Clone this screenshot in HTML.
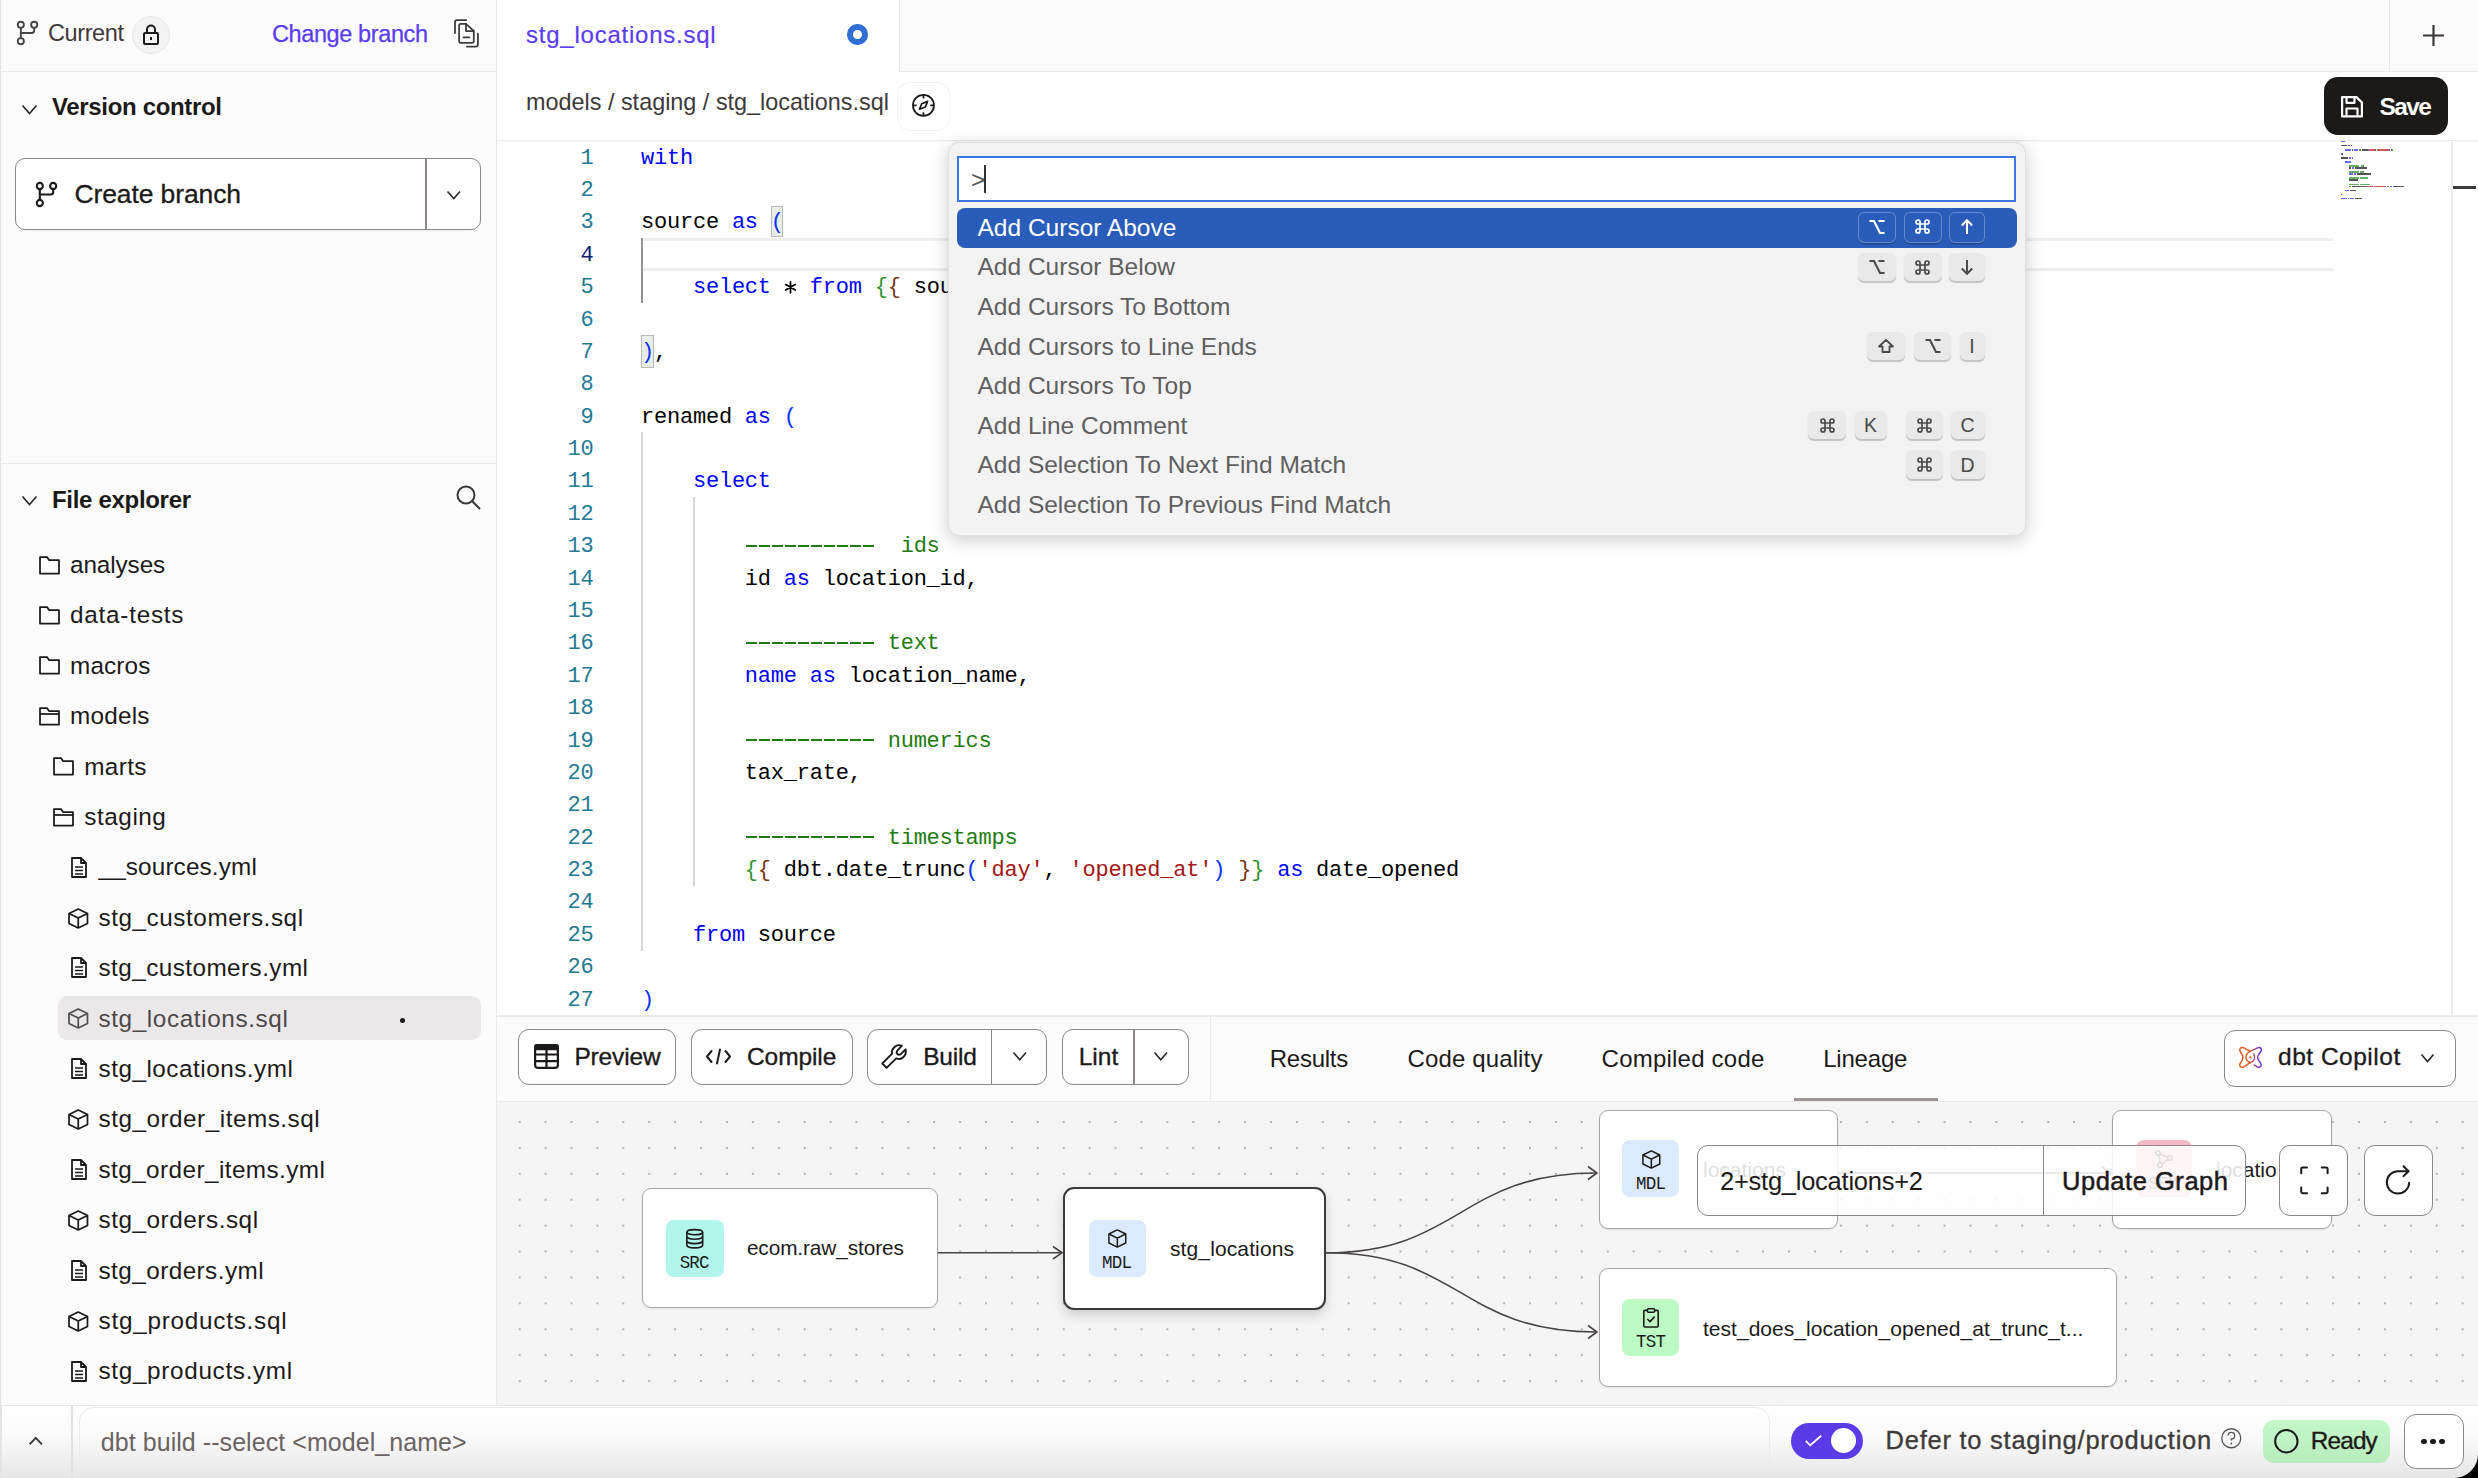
<!DOCTYPE html>
<html><head><meta charset="utf-8"><style>
*{box-sizing:border-box;margin:0;padding:0}
html,body{width:2478px;height:1478px;overflow:hidden;background:#fafafa;font-family:"Liberation Sans",sans-serif;color:#1c1a19}
body{position:relative}
.abs{position:absolute}
.t{position:absolute;white-space:pre;line-height:1}
svg{position:absolute;overflow:visible}
</style></head><body>
<div class="abs" style="left:0.00px;top:0.00px;width:497.00px;height:1405.00px;background:#fcfcfc;"></div>
<div class="abs" style="left:0.00px;top:0.00px;width:1.20px;height:1478.00px;background:#e2e2e2;"></div>
<div class="abs" style="left:496.00px;top:0.00px;width:1.30px;height:1405.00px;background:#ebe9e9;"></div>
<div class="abs" style="left:0.00px;top:70.60px;width:496.00px;height:1.40px;background:#ebe9e9;"></div>
<div class="abs" style="left:0.00px;top:463.00px;width:496.00px;height:1.40px;background:#ebe9e9;"></div>
<svg style="left:17.00px;top:21.00px;" width="21.00" height="24.00" viewBox="0 0 21 24"><g fill="none" stroke="#4a4545" stroke-width="2" transform="scale(0.954545,0.96)"><circle cx="4" cy="4" r="3.2"/><circle cx="18" cy="4" r="3.2"/><circle cx="4" cy="21" r="3.2"/><path d="M4 7.2 V17.8"/><path d="M18 7.2 V10 Q18 12.5 15.5 12.5 H4"/></g></svg>
<div class="t" style="left:48.00px;top:22.31px;font-size:23.50px;color:#3f3a3a;font-family:'Liberation Sans',sans-serif;letter-spacing:-0.394px;">Current</div>
<div class="abs" style="left:132.00px;top:16.00px;width:38.00px;height:38.00px;border-radius:50%;background:#f3f3f3;border:1px solid #e8e8e8;"></div>
<svg style="left:143.00px;top:24.00px;" width="16.00" height="21.00" viewBox="0 0 16 21"><g fill="none" stroke="#1c1a19" stroke-width="2"><rect x="1" y="9" width="14" height="11" rx="1"/><path d="M4 9 V5.5 A4 4 0 0 1 12 5.5 V9"/><path d="M8 13 V16"/></g></svg>
<div class="t" style="left:272.00px;top:23.31px;font-size:23.50px;color:#5b3cf0;font-family:'Liberation Sans',sans-serif;letter-spacing:-0.392px;-webkit-text-stroke:0.25px #5b3cf0;">Change branch</div>
<svg style="left:450.00px;top:15.00px;" width="32.00" height="35.00" viewBox="450 15 32 35"><g fill="none" stroke="#3f3a3a" stroke-width="1.75" stroke-linecap="round" stroke-linejoin="round"><path d="M455 33 V22 Q455 20 457 20 H466.2"/><path d="M461 23.9 H466 L473.8 31 V41 Q473.8 42.8 472 42.8 H461 Q459.1 42.8 459.1 41 V25.8 Q459.1 23.9 461 23.9 Z"/><path d="M466 23.9 V31 H473.8"/><path d="M463.5 37.4 H469.4"/><path d="M477.9 33.7 V44.5 Q477.9 46.5 476 46.5 H466.9"/></g></svg>
<svg style="left:22.00px;top:104.50px;" width="15.00" height="9.00" viewBox="0 0 15 9"><polyline points="0.5,0.5 7.5,8.5 14.5,0.5" fill="none" stroke="#2a2626" stroke-width="1.6" stroke-linecap="butt" stroke-linejoin="miter"/></svg>
<div class="t" style="left:52.00px;top:94.88px;font-size:24.00px;color:#1c1a19;font-family:'Liberation Sans',sans-serif;font-weight:bold;letter-spacing:-0.336px;">Version control</div>
<div class="abs" style="left:15.00px;top:158.00px;width:466.00px;height:72.00px;border:1.5px solid #8d8787;border-radius:10px;background:#fff;box-shadow:0 1px 2px rgba(0,0,0,0.06);"></div>
<div class="abs" style="left:425.00px;top:158.00px;width:1.50px;height:72.00px;background:#8d8787;"></div>
<svg style="left:36.00px;top:182.00px;" width="21.00" height="25.00" viewBox="0 0 21 25"><g fill="none" stroke="#1c1a19" stroke-width="2.2" transform="scale(0.954545,1)"><circle cx="4" cy="4" r="3.2"/><circle cx="18" cy="4" r="3.2"/><circle cx="4" cy="21" r="3.2"/><path d="M4 7.2 V17.8"/><path d="M18 7.2 V10 Q18 12.5 15.5 12.5 H4"/></g></svg>
<div class="t" style="left:74.50px;top:180.57px;font-size:26.50px;color:#1c1a19;font-family:'Liberation Sans',sans-serif;letter-spacing:-0.119px;-webkit-text-stroke:0.30px #1c1a19;">Create branch</div>
<svg style="left:446.50px;top:190.50px;" width="13.50" height="8.00" viewBox="0 0 13.5 8"><polyline points="0.5,0.5 6.75,7.5 13,0.5" fill="none" stroke="#2a2626" stroke-width="1.6" stroke-linecap="butt" stroke-linejoin="miter"/></svg>
<svg style="left:22.00px;top:495.50px;" width="15.00" height="9.00" viewBox="0 0 15 9"><polyline points="0.5,0.5 7.5,8.5 14.5,0.5" fill="none" stroke="#2a2626" stroke-width="1.6" stroke-linecap="butt" stroke-linejoin="miter"/></svg>
<div class="t" style="left:52.00px;top:487.68px;font-size:24.00px;color:#1c1a19;font-family:'Liberation Sans',sans-serif;font-weight:bold;letter-spacing:-0.310px;">File explorer</div>
<svg style="left:456.00px;top:485.00px;" width="25.00" height="25.00" viewBox="0 0 25 25"><g fill="none" stroke="#3a3636" stroke-width="2"><circle cx="10" cy="10" r="8.5"/><path d="M16.2 16.2 L24 24"/></g></svg>
<svg style="left:39.00px;top:555.60px;" width="21.50" height="19.00" viewBox="0 0 21.5 19"><g fill="none" stroke="#1c1a19" stroke-width="1.75" stroke-linejoin="round"><path d="M1 1 H8 L10 4 H20 V17.5 H1 Z"/></g></svg>
<div class="t" style="left:70.00px;top:553.03px;font-size:24.30px;color:#1c1a19;font-family:'Liberation Sans',sans-serif;letter-spacing:-0.101px;">analyses</div>
<svg style="left:39.00px;top:606.00px;" width="21.50" height="19.00" viewBox="0 0 21.5 19"><g fill="none" stroke="#1c1a19" stroke-width="1.75" stroke-linejoin="round"><path d="M1 1 H8 L10 4 H20 V17.5 H1 Z"/></g></svg>
<div class="t" style="left:70.00px;top:603.43px;font-size:24.30px;color:#1c1a19;font-family:'Liberation Sans',sans-serif;letter-spacing:0.755px;">data-tests</div>
<svg style="left:39.00px;top:656.40px;" width="21.50" height="19.00" viewBox="0 0 21.5 19"><g fill="none" stroke="#1c1a19" stroke-width="1.75" stroke-linejoin="round"><path d="M1 1 H8 L10 4 H20 V17.5 H1 Z"/></g></svg>
<div class="t" style="left:70.00px;top:653.83px;font-size:24.30px;color:#1c1a19;font-family:'Liberation Sans',sans-serif;letter-spacing:0.147px;">macros</div>
<svg style="left:39.00px;top:706.80px;" width="21.50" height="19.00" viewBox="0 0 21.5 19"><g fill="none" stroke="#1c1a19" stroke-width="1.75" stroke-linejoin="round"><path d="M1 1 H8 L10 4 H20 V17.5 H1 Z"/><path d="M1 7 H20"/></g></svg>
<div class="t" style="left:70.00px;top:704.23px;font-size:24.30px;color:#1c1a19;font-family:'Liberation Sans',sans-serif;letter-spacing:0.213px;">models</div>
<svg style="left:53.30px;top:757.20px;" width="21.50" height="19.00" viewBox="0 0 21.5 19"><g fill="none" stroke="#1c1a19" stroke-width="1.75" stroke-linejoin="round"><path d="M1 1 H8 L10 4 H20 V17.5 H1 Z"/></g></svg>
<div class="t" style="left:84.30px;top:754.63px;font-size:24.30px;color:#1c1a19;font-family:'Liberation Sans',sans-serif;letter-spacing:0.337px;">marts</div>
<svg style="left:53.30px;top:807.60px;" width="21.50" height="19.00" viewBox="0 0 21.5 19"><g fill="none" stroke="#1c1a19" stroke-width="1.75" stroke-linejoin="round"><path d="M1 1 H8 L10 4 H20 V17.5 H1 Z"/><path d="M1 7 H20"/></g></svg>
<div class="t" style="left:84.30px;top:805.03px;font-size:24.30px;color:#1c1a19;font-family:'Liberation Sans',sans-serif;letter-spacing:0.540px;">staging</div>
<svg style="left:70.50px;top:856.50px;" width="16.00" height="21.00" viewBox="0 0 16 21"><g fill="none" stroke="#1c1a19" stroke-width="1.8" stroke-linejoin="round"><path d="M1 1 H10 L15 6 V20 H1 Z"/><path d="M10 1 V6 H15"/><path d="M4 10 H12 M4 13.5 H12 M4 17 H12" stroke-width="1.6"/></g></svg>
<div class="t" style="left:98.50px;top:855.43px;font-size:24.30px;color:#1c1a19;font-family:'Liberation Sans',sans-serif;letter-spacing:0.137px;">__sources.yml</div>
<svg style="left:67.50px;top:907.60px;" width="20.50" height="21.00" viewBox="0 0 20.5 21"><g fill="none" stroke="#1c1a19" stroke-width="1.7" stroke-linejoin="round" transform="scale(1.025,1)"><path d="M10 1 L19 5.5 V15.5 L10 20 L1 15.5 V5.5 Z"/><path d="M1 5.5 L10 10 L19 5.5 M10 10 V20"/></g></svg>
<div class="t" style="left:98.50px;top:905.83px;font-size:24.30px;color:#1c1a19;font-family:'Liberation Sans',sans-serif;letter-spacing:0.548px;">stg_customers.sql</div>
<svg style="left:70.50px;top:957.30px;" width="16.00" height="21.00" viewBox="0 0 16 21"><g fill="none" stroke="#1c1a19" stroke-width="1.8" stroke-linejoin="round"><path d="M1 1 H10 L15 6 V20 H1 Z"/><path d="M10 1 V6 H15"/><path d="M4 10 H12 M4 13.5 H12 M4 17 H12" stroke-width="1.6"/></g></svg>
<div class="t" style="left:98.50px;top:956.23px;font-size:24.30px;color:#1c1a19;font-family:'Liberation Sans',sans-serif;letter-spacing:0.434px;">stg_customers.yml</div>
<div class="abs" style="left:58.00px;top:995.80px;width:423.00px;height:44.00px;background:#ebe8e9;border-radius:9px;"></div>
<div class="abs" style="left:399.50px;top:1017.90px;width:5.00px;height:5.00px;background:#1c1a19;border-radius:50%;"></div>
<svg style="left:67.50px;top:1008.40px;" width="20.50" height="21.00" viewBox="0 0 20.5 21"><g fill="none" stroke="#55504f" stroke-width="1.7" stroke-linejoin="round" transform="scale(1.025,1)"><path d="M10 1 L19 5.5 V15.5 L10 20 L1 15.5 V5.5 Z"/><path d="M1 5.5 L10 10 L19 5.5 M10 10 V20"/></g></svg>
<div class="t" style="left:98.50px;top:1006.63px;font-size:24.30px;color:#4d4848;font-family:'Liberation Sans',sans-serif;letter-spacing:0.603px;">stg_locations.sql</div>
<svg style="left:70.50px;top:1058.10px;" width="16.00" height="21.00" viewBox="0 0 16 21"><g fill="none" stroke="#1c1a19" stroke-width="1.8" stroke-linejoin="round"><path d="M1 1 H10 L15 6 V20 H1 Z"/><path d="M10 1 V6 H15"/><path d="M4 10 H12 M4 13.5 H12 M4 17 H12" stroke-width="1.6"/></g></svg>
<div class="t" style="left:98.50px;top:1057.03px;font-size:24.30px;color:#1c1a19;font-family:'Liberation Sans',sans-serif;letter-spacing:0.501px;">stg_locations.yml</div>
<svg style="left:67.50px;top:1109.20px;" width="20.50" height="21.00" viewBox="0 0 20.5 21"><g fill="none" stroke="#1c1a19" stroke-width="1.7" stroke-linejoin="round" transform="scale(1.025,1)"><path d="M10 1 L19 5.5 V15.5 L10 20 L1 15.5 V5.5 Z"/><path d="M1 5.5 L10 10 L19 5.5 M10 10 V20"/></g></svg>
<div class="t" style="left:98.50px;top:1107.43px;font-size:24.30px;color:#1c1a19;font-family:'Liberation Sans',sans-serif;letter-spacing:0.508px;">stg_order_items.sql</div>
<svg style="left:70.50px;top:1158.90px;" width="16.00" height="21.00" viewBox="0 0 16 21"><g fill="none" stroke="#1c1a19" stroke-width="1.8" stroke-linejoin="round"><path d="M1 1 H10 L15 6 V20 H1 Z"/><path d="M10 1 V6 H15"/><path d="M4 10 H12 M4 13.5 H12 M4 17 H12" stroke-width="1.6"/></g></svg>
<div class="t" style="left:98.50px;top:1157.83px;font-size:24.30px;color:#1c1a19;font-family:'Liberation Sans',sans-serif;letter-spacing:0.423px;">stg_order_items.yml</div>
<svg style="left:67.50px;top:1210.00px;" width="20.50" height="21.00" viewBox="0 0 20.5 21"><g fill="none" stroke="#1c1a19" stroke-width="1.7" stroke-linejoin="round" transform="scale(1.025,1)"><path d="M10 1 L19 5.5 V15.5 L10 20 L1 15.5 V5.5 Z"/><path d="M1 5.5 L10 10 L19 5.5 M10 10 V20"/></g></svg>
<div class="t" style="left:98.50px;top:1208.23px;font-size:24.30px;color:#1c1a19;font-family:'Liberation Sans',sans-serif;letter-spacing:0.536px;">stg_orders.sql</div>
<svg style="left:70.50px;top:1259.70px;" width="16.00" height="21.00" viewBox="0 0 16 21"><g fill="none" stroke="#1c1a19" stroke-width="1.8" stroke-linejoin="round"><path d="M1 1 H10 L15 6 V20 H1 Z"/><path d="M10 1 V6 H15"/><path d="M4 10 H12 M4 13.5 H12 M4 17 H12" stroke-width="1.6"/></g></svg>
<div class="t" style="left:98.50px;top:1258.63px;font-size:24.30px;color:#1c1a19;font-family:'Liberation Sans',sans-serif;letter-spacing:0.442px;">stg_orders.yml</div>
<svg style="left:67.50px;top:1310.80px;" width="20.50" height="21.00" viewBox="0 0 20.5 21"><g fill="none" stroke="#1c1a19" stroke-width="1.7" stroke-linejoin="round" transform="scale(1.025,1)"><path d="M10 1 L19 5.5 V15.5 L10 20 L1 15.5 V5.5 Z"/><path d="M1 5.5 L10 10 L19 5.5 M10 10 V20"/></g></svg>
<div class="t" style="left:98.50px;top:1309.03px;font-size:24.30px;color:#1c1a19;font-family:'Liberation Sans',sans-serif;letter-spacing:0.750px;">stg_products.sql</div>
<svg style="left:70.50px;top:1360.50px;" width="16.00" height="21.00" viewBox="0 0 16 21"><g fill="none" stroke="#1c1a19" stroke-width="1.8" stroke-linejoin="round"><path d="M1 1 H10 L15 6 V20 H1 Z"/><path d="M10 1 V6 H15"/><path d="M4 10 H12 M4 13.5 H12 M4 17 H12" stroke-width="1.6"/></g></svg>
<div class="t" style="left:98.50px;top:1359.43px;font-size:24.30px;color:#1c1a19;font-family:'Liberation Sans',sans-serif;letter-spacing:0.668px;">stg_products.yml</div>
<div class="abs" style="left:497.00px;top:0.00px;width:1981.00px;height:71.00px;background:#fcfcfc;"></div>
<div class="abs" style="left:497.00px;top:70.60px;width:1981.00px;height:1.40px;background:#ebe9e9;"></div>
<div class="abs" style="left:497.00px;top:0.00px;width:402.00px;height:72.00px;background:#ffffff;"></div>
<div class="abs" style="left:899.00px;top:0.00px;width:1.30px;height:71.00px;background:#ebe9e9;"></div>
<div class="t" style="left:526.00px;top:22.88px;font-size:24.00px;color:#5b3cf0;font-family:'Liberation Sans',sans-serif;letter-spacing:0.766px;-webkit-text-stroke:0.20px #5b3cf0;">stg_locations.sql</div>
<div class="abs" style="left:847.00px;top:24.20px;width:20.60px;height:20.60px;border-radius:50%;border:6.7px solid #2f6fd3;background:#fff;"></div>
<div class="abs" style="left:2389.00px;top:0.00px;width:1.30px;height:71.00px;background:#ebe9e9;"></div>
<svg style="left:2422.50px;top:25.00px;" width="21.00" height="21.00" viewBox="0 0 21 21"><path d="M10.5 0 V21 M0 10.5 H21" stroke="#3a3636" stroke-width="2.2" fill="none"/></svg>
<div class="abs" style="left:497.00px;top:72.00px;width:1981.00px;height:68.00px;background:#ffffff;"></div>
<div class="abs" style="left:497.00px;top:139.80px;width:1981.00px;height:1.40px;background:#ebe9e9;"></div>
<div class="t" style="left:526.00px;top:91.49px;font-size:23.40px;color:#3d3939;font-family:'Liberation Sans',sans-serif;letter-spacing:0.003px;">models / staging / stg_locations.sql</div>
<div class="abs" style="left:897.50px;top:82.50px;width:51.00px;height:47.00px;border-radius:12px;background:#fff;box-shadow:0 0 0 1px #f2f2f2;"></div>
<svg style="left:912.00px;top:94.00px;" width="23.00" height="23.00" viewBox="0 0 23 23"><g fill="none" stroke="#1c1a19" stroke-width="1.75"><circle cx="11.45" cy="11.4" r="10.5"/><path d="M11.45 1 V4.6 M11.45 18.2 V21.8 M1 11.4 H4.6 M18.3 11.4 H21.9"/><path d="M15.6 7.4 L9.7 9.8 L7.5 15.3 L13.3 13 Z" stroke-linejoin="round"/></g></svg>
<div class="abs" style="left:2324.00px;top:77.00px;width:124.00px;height:57.50px;background:#1c1a19;border-radius:14px;"></div>
<svg style="left:2340.50px;top:96.00px;" width="22.00" height="21.50" viewBox="0 0 22 21.5"><g fill="none" stroke="#fff" stroke-width="2.2" stroke-linejoin="round"><path d="M1.1 1.1 H15.5 L20.9 6.5 V20.4 H1.1 Z"/><path d="M5.5 1.1 V6.8 H13.5 V1.1"/><path d="M5.5 20.4 V12.5 H16.5 V20.4"/></g></svg>
<div class="t" style="left:2379.50px;top:94.55px;font-size:24.40px;color:#ffffff;font-family:'Liberation Sans',sans-serif;font-weight:bold;letter-spacing:-1.562px;">Save</div>
<div class="abs" style="left:497.00px;top:141.50px;width:1981.00px;height:874.00px;background:#ffffff;"></div>
<div class="abs" style="left:2451.00px;top:141.50px;width:1.50px;height:874.00px;background:#ededed;"></div>
<div class="abs" style="left:2453.00px;top:186.00px;width:23.00px;height:3.00px;background:#3a3a3a;"></div>
<div class="abs" style="left:643.00px;top:238.30px;width:1690.00px;height:33.00px;border-top:3px solid #eeeeee;border-bottom:3px solid #eeeeee;"></div>
<div class="abs" style="left:641.00px;top:238.00px;width:2.00px;height:65.00px;background:#939393;"></div>
<div class="abs" style="left:641.00px;top:432.00px;width:1.50px;height:519.00px;background:#d6d6d6;"></div>
<div class="abs" style="left:693.00px;top:497.00px;width:1.50px;height:389.00px;background:#d6d6d6;"></div>
<div class="abs" style="left:771.00px;top:206.30px;width:12.00px;height:31.00px;background:#e8ede6;border:1px solid #b9b9b9;"></div>
<div class="abs" style="left:641.20px;top:335.10px;width:12.40px;height:32.50px;background:#e8ede6;border:1px solid #b9b9b9;"></div>
<div class="t" style="left:580.52px;top:147.64px;font-family:'Liberation Mono',monospace;font-size:22px;letter-spacing:-0.220px;color:#237893">1</div>
<div class="t" style="left:641px;top:147.64px;font-family:'Liberation Mono',monospace;font-size:22px;letter-spacing:-0.220px;color:#000"><span style="color:#0000ff">with</span></div>
<div class="t" style="left:580.52px;top:180.02px;font-family:'Liberation Mono',monospace;font-size:22px;letter-spacing:-0.220px;color:#237893">2</div>
<div class="t" style="left:580.52px;top:212.41px;font-family:'Liberation Mono',monospace;font-size:22px;letter-spacing:-0.220px;color:#237893">3</div>
<div class="t" style="left:641px;top:212.41px;font-family:'Liberation Mono',monospace;font-size:22px;letter-spacing:-0.220px;color:#000"><span style="color:#000000">source </span><span style="color:#0000ff">as</span><span style="color:#000000"> </span><span style="color:#0431fa">(</span></div>
<div class="t" style="left:580.52px;top:244.79px;font-family:'Liberation Mono',monospace;font-size:22px;letter-spacing:-0.220px;color:#0b216f">4</div>
<div class="t" style="left:580.52px;top:277.18px;font-family:'Liberation Mono',monospace;font-size:22px;letter-spacing:-0.220px;color:#237893">5</div>
<div class="t" style="left:641px;top:277.18px;font-family:'Liberation Mono',monospace;font-size:22px;letter-spacing:-0.220px;color:#000"><span style="color:#000000">    </span><span style="color:#0000ff">select</span><span style="color:#000000">   </span><span style="color:#0000ff">from</span><span style="color:#000000"> </span><span style="color:#319331">{</span><span style="color:#7b3814">{</span><span style="color:#000000"> source</span><span style="color:#0431fa">(</span><span style="color:#a31515">&#x27;ecom&#x27;</span><span style="color:#000000">, </span><span style="color:#a31515">&#x27;raw_stores&#x27;</span><span style="color:#0431fa">)</span><span style="color:#000000"> </span><span style="color:#7b3814">}</span><span style="color:#319331">}</span></div>
<div class="t" style="left:580.52px;top:309.56px;font-family:'Liberation Mono',monospace;font-size:22px;letter-spacing:-0.220px;color:#237893">6</div>
<div class="t" style="left:580.52px;top:341.95px;font-family:'Liberation Mono',monospace;font-size:22px;letter-spacing:-0.220px;color:#237893">7</div>
<div class="t" style="left:641px;top:341.95px;font-family:'Liberation Mono',monospace;font-size:22px;letter-spacing:-0.220px;color:#000"><span style="color:#0431fa">)</span><span style="color:#000000">,</span></div>
<div class="t" style="left:580.52px;top:374.33px;font-family:'Liberation Mono',monospace;font-size:22px;letter-spacing:-0.220px;color:#237893">8</div>
<div class="t" style="left:580.52px;top:406.72px;font-family:'Liberation Mono',monospace;font-size:22px;letter-spacing:-0.220px;color:#237893">9</div>
<div class="t" style="left:641px;top:406.72px;font-family:'Liberation Mono',monospace;font-size:22px;letter-spacing:-0.220px;color:#000"><span style="color:#000000">renamed </span><span style="color:#0000ff">as</span><span style="color:#000000"> </span><span style="color:#0431fa">(</span></div>
<div class="t" style="left:567.54px;top:439.10px;font-family:'Liberation Mono',monospace;font-size:22px;letter-spacing:-0.220px;color:#237893">10</div>
<div class="t" style="left:567.54px;top:471.49px;font-family:'Liberation Mono',monospace;font-size:22px;letter-spacing:-0.220px;color:#237893">11</div>
<div class="t" style="left:641px;top:471.49px;font-family:'Liberation Mono',monospace;font-size:22px;letter-spacing:-0.220px;color:#000"><span style="color:#000000">    </span><span style="color:#0000ff">select</span></div>
<div class="t" style="left:567.54px;top:503.87px;font-family:'Liberation Mono',monospace;font-size:22px;letter-spacing:-0.220px;color:#237893">12</div>
<div class="t" style="left:567.54px;top:536.26px;font-family:'Liberation Mono',monospace;font-size:22px;letter-spacing:-0.220px;color:#237893">13</div>
<div class="abs" style="left:745.74px;top:544.72px;width:127.90px;height:2.10px;background:repeating-linear-gradient(90deg,#1e7b10 0 11.1px,transparent 11.1px 12.980px);"></div>
<div class="t" style="left:641px;top:536.26px;font-family:'Liberation Mono',monospace;font-size:22px;letter-spacing:-0.220px;color:#000"><span style="color:#000000">        </span><span style="color:#1e7b10">            ids</span></div>
<div class="t" style="left:567.54px;top:568.64px;font-family:'Liberation Mono',monospace;font-size:22px;letter-spacing:-0.220px;color:#237893">14</div>
<div class="t" style="left:641px;top:568.64px;font-family:'Liberation Mono',monospace;font-size:22px;letter-spacing:-0.220px;color:#000"><span style="color:#000000">        id </span><span style="color:#0000ff">as</span><span style="color:#000000"> location_id,</span></div>
<div class="t" style="left:567.54px;top:601.03px;font-family:'Liberation Mono',monospace;font-size:22px;letter-spacing:-0.220px;color:#237893">15</div>
<div class="t" style="left:567.54px;top:633.41px;font-family:'Liberation Mono',monospace;font-size:22px;letter-spacing:-0.220px;color:#237893">16</div>
<div class="abs" style="left:745.74px;top:641.88px;width:127.90px;height:2.10px;background:repeating-linear-gradient(90deg,#1e7b10 0 11.1px,transparent 11.1px 12.980px);"></div>
<div class="t" style="left:641px;top:633.41px;font-family:'Liberation Mono',monospace;font-size:22px;letter-spacing:-0.220px;color:#000"><span style="color:#000000">        </span><span style="color:#1e7b10">           text</span></div>
<div class="t" style="left:567.54px;top:665.80px;font-family:'Liberation Mono',monospace;font-size:22px;letter-spacing:-0.220px;color:#237893">17</div>
<div class="t" style="left:641px;top:665.80px;font-family:'Liberation Mono',monospace;font-size:22px;letter-spacing:-0.220px;color:#000"><span style="color:#000000">        </span><span style="color:#0000ff">name</span><span style="color:#000000"> </span><span style="color:#0000ff">as</span><span style="color:#000000"> location_name,</span></div>
<div class="t" style="left:567.54px;top:698.18px;font-family:'Liberation Mono',monospace;font-size:22px;letter-spacing:-0.220px;color:#237893">18</div>
<div class="t" style="left:567.54px;top:730.57px;font-family:'Liberation Mono',monospace;font-size:22px;letter-spacing:-0.220px;color:#237893">19</div>
<div class="abs" style="left:745.74px;top:739.03px;width:127.90px;height:2.10px;background:repeating-linear-gradient(90deg,#1e7b10 0 11.1px,transparent 11.1px 12.980px);"></div>
<div class="t" style="left:641px;top:730.57px;font-family:'Liberation Mono',monospace;font-size:22px;letter-spacing:-0.220px;color:#000"><span style="color:#000000">        </span><span style="color:#1e7b10">           numerics</span></div>
<div class="t" style="left:567.54px;top:762.95px;font-family:'Liberation Mono',monospace;font-size:22px;letter-spacing:-0.220px;color:#237893">20</div>
<div class="t" style="left:641px;top:762.95px;font-family:'Liberation Mono',monospace;font-size:22px;letter-spacing:-0.220px;color:#000"><span style="color:#000000">        tax_rate,</span></div>
<div class="t" style="left:567.54px;top:795.34px;font-family:'Liberation Mono',monospace;font-size:22px;letter-spacing:-0.220px;color:#237893">21</div>
<div class="t" style="left:567.54px;top:827.72px;font-family:'Liberation Mono',monospace;font-size:22px;letter-spacing:-0.220px;color:#237893">22</div>
<div class="abs" style="left:745.74px;top:836.18px;width:127.90px;height:2.10px;background:repeating-linear-gradient(90deg,#1e7b10 0 11.1px,transparent 11.1px 12.980px);"></div>
<div class="t" style="left:641px;top:827.72px;font-family:'Liberation Mono',monospace;font-size:22px;letter-spacing:-0.220px;color:#000"><span style="color:#000000">        </span><span style="color:#1e7b10">           timestamps</span></div>
<div class="t" style="left:567.54px;top:860.11px;font-family:'Liberation Mono',monospace;font-size:22px;letter-spacing:-0.220px;color:#237893">23</div>
<div class="t" style="left:641px;top:860.11px;font-family:'Liberation Mono',monospace;font-size:22px;letter-spacing:-0.220px;color:#000"><span style="color:#000000">        </span><span style="color:#319331">{</span><span style="color:#7b3814">{</span><span style="color:#000000"> dbt.date_trunc</span><span style="color:#0431fa">(</span><span style="color:#a31515">&#x27;day&#x27;</span><span style="color:#000000">, </span><span style="color:#a31515">&#x27;opened_at&#x27;</span><span style="color:#0431fa">)</span><span style="color:#000000"> </span><span style="color:#7b3814">}</span><span style="color:#319331">}</span><span style="color:#000000"> </span><span style="color:#0000ff">as</span><span style="color:#000000"> date_opened</span></div>
<div class="t" style="left:567.54px;top:892.49px;font-family:'Liberation Mono',monospace;font-size:22px;letter-spacing:-0.220px;color:#237893">24</div>
<div class="t" style="left:567.54px;top:924.88px;font-family:'Liberation Mono',monospace;font-size:22px;letter-spacing:-0.220px;color:#237893">25</div>
<div class="t" style="left:641px;top:924.88px;font-family:'Liberation Mono',monospace;font-size:22px;letter-spacing:-0.220px;color:#000"><span style="color:#000000">    </span><span style="color:#0000ff">from</span><span style="color:#000000"> source</span></div>
<div class="t" style="left:567.54px;top:957.26px;font-family:'Liberation Mono',monospace;font-size:22px;letter-spacing:-0.220px;color:#237893">26</div>
<div class="t" style="left:567.54px;top:989.65px;font-family:'Liberation Mono',monospace;font-size:22px;letter-spacing:-0.220px;color:#237893">27</div>
<div class="t" style="left:641px;top:989.65px;font-family:'Liberation Mono',monospace;font-size:22px;letter-spacing:-0.220px;color:#000"><span style="color:#0431fa">)</span></div>
<svg style="left:783.00px;top:279.00px;" width="15.00" height="17.00" viewBox="0 0 15 17"><path d="M7.5 2.9 V13.7 M2.75 5.55 L12.25 11.05 M2.75 11.05 L12.25 5.55" stroke="#000" stroke-width="1.75" stroke-linecap="round" fill="none"/></svg>
<div class="abs" style="left:2341.00px;top:140.90px;width:4.00px;height:1.50px;background:#6a6aff;"></div>
<div class="abs" style="left:2341.00px;top:144.96px;width:6.00px;height:1.50px;background:#555555;"></div>
<div class="abs" style="left:2348.00px;top:144.96px;width:2.00px;height:1.50px;background:#6a6aff;"></div>
<div class="abs" style="left:2351.00px;top:144.96px;width:1.00px;height:1.50px;background:#6a6aff;"></div>
<div class="abs" style="left:2345.00px;top:149.02px;width:6.00px;height:1.50px;background:#6a6aff;"></div>
<div class="abs" style="left:2352.00px;top:149.02px;width:1.00px;height:1.50px;background:#555555;"></div>
<div class="abs" style="left:2354.00px;top:149.02px;width:4.00px;height:1.50px;background:#6a6aff;"></div>
<div class="abs" style="left:2359.00px;top:149.02px;width:1.00px;height:1.50px;background:#66b066;"></div>
<div class="abs" style="left:2360.00px;top:149.02px;width:1.00px;height:1.50px;background:#996644;"></div>
<div class="abs" style="left:2362.00px;top:149.02px;width:6.00px;height:1.50px;background:#555555;"></div>
<div class="abs" style="left:2368.00px;top:149.02px;width:1.00px;height:1.50px;background:#6a6aff;"></div>
<div class="abs" style="left:2369.00px;top:149.02px;width:6.00px;height:1.50px;background:#cc5a5a;"></div>
<div class="abs" style="left:2375.00px;top:149.02px;width:1.00px;height:1.50px;background:#555555;"></div>
<div class="abs" style="left:2377.00px;top:149.02px;width:12.00px;height:1.50px;background:#cc5a5a;"></div>
<div class="abs" style="left:2389.00px;top:149.02px;width:1.00px;height:1.50px;background:#6a6aff;"></div>
<div class="abs" style="left:2391.00px;top:149.02px;width:1.00px;height:1.50px;background:#996644;"></div>
<div class="abs" style="left:2392.00px;top:149.02px;width:1.00px;height:1.50px;background:#66b066;"></div>
<div class="abs" style="left:2341.00px;top:153.08px;width:1.00px;height:1.50px;background:#6a6aff;"></div>
<div class="abs" style="left:2342.00px;top:153.08px;width:1.00px;height:1.50px;background:#555555;"></div>
<div class="abs" style="left:2341.00px;top:157.14px;width:7.00px;height:1.50px;background:#555555;"></div>
<div class="abs" style="left:2349.00px;top:157.14px;width:2.00px;height:1.50px;background:#6a6aff;"></div>
<div class="abs" style="left:2352.00px;top:157.14px;width:1.00px;height:1.50px;background:#6a6aff;"></div>
<div class="abs" style="left:2345.00px;top:161.20px;width:6.00px;height:1.50px;background:#6a6aff;"></div>
<div class="abs" style="left:2349.00px;top:165.26px;width:10.00px;height:1.50px;background:#66b066;"></div>
<div class="abs" style="left:2361.00px;top:165.26px;width:3.00px;height:1.50px;background:#66b066;"></div>
<div class="abs" style="left:2349.00px;top:167.29px;width:2.00px;height:1.50px;background:#555555;"></div>
<div class="abs" style="left:2352.00px;top:167.29px;width:2.00px;height:1.50px;background:#6a6aff;"></div>
<div class="abs" style="left:2355.00px;top:167.29px;width:12.00px;height:1.50px;background:#555555;"></div>
<div class="abs" style="left:2349.00px;top:171.35px;width:10.00px;height:1.50px;background:#66b066;"></div>
<div class="abs" style="left:2360.00px;top:171.35px;width:4.00px;height:1.50px;background:#66b066;"></div>
<div class="abs" style="left:2349.00px;top:173.38px;width:4.00px;height:1.50px;background:#6a6aff;"></div>
<div class="abs" style="left:2354.00px;top:173.38px;width:2.00px;height:1.50px;background:#6a6aff;"></div>
<div class="abs" style="left:2357.00px;top:173.38px;width:14.00px;height:1.50px;background:#555555;"></div>
<div class="abs" style="left:2349.00px;top:177.44px;width:10.00px;height:1.50px;background:#66b066;"></div>
<div class="abs" style="left:2360.00px;top:177.44px;width:8.00px;height:1.50px;background:#66b066;"></div>
<div class="abs" style="left:2349.00px;top:179.47px;width:9.00px;height:1.50px;background:#555555;"></div>
<div class="abs" style="left:2349.00px;top:183.53px;width:10.00px;height:1.50px;background:#66b066;"></div>
<div class="abs" style="left:2360.00px;top:183.53px;width:10.00px;height:1.50px;background:#66b066;"></div>
<div class="abs" style="left:2349.00px;top:185.56px;width:1.00px;height:1.50px;background:#66b066;"></div>
<div class="abs" style="left:2350.00px;top:185.56px;width:1.00px;height:1.50px;background:#996644;"></div>
<div class="abs" style="left:2352.00px;top:185.56px;width:14.00px;height:1.50px;background:#555555;"></div>
<div class="abs" style="left:2366.00px;top:185.56px;width:1.00px;height:1.50px;background:#6a6aff;"></div>
<div class="abs" style="left:2367.00px;top:185.56px;width:5.00px;height:1.50px;background:#cc5a5a;"></div>
<div class="abs" style="left:2372.00px;top:185.56px;width:1.00px;height:1.50px;background:#555555;"></div>
<div class="abs" style="left:2374.00px;top:185.56px;width:11.00px;height:1.50px;background:#cc5a5a;"></div>
<div class="abs" style="left:2385.00px;top:185.56px;width:1.00px;height:1.50px;background:#6a6aff;"></div>
<div class="abs" style="left:2387.00px;top:185.56px;width:1.00px;height:1.50px;background:#996644;"></div>
<div class="abs" style="left:2388.00px;top:185.56px;width:1.00px;height:1.50px;background:#66b066;"></div>
<div class="abs" style="left:2390.00px;top:185.56px;width:2.00px;height:1.50px;background:#6a6aff;"></div>
<div class="abs" style="left:2393.00px;top:185.56px;width:11.00px;height:1.50px;background:#555555;"></div>
<div class="abs" style="left:2345.00px;top:189.62px;width:4.00px;height:1.50px;background:#6a6aff;"></div>
<div class="abs" style="left:2350.00px;top:189.62px;width:6.00px;height:1.50px;background:#555555;"></div>
<div class="abs" style="left:2341.00px;top:193.68px;width:1.00px;height:1.50px;background:#6a6aff;"></div>
<div class="abs" style="left:2341.00px;top:197.74px;width:6.00px;height:1.50px;background:#6a6aff;"></div>
<div class="abs" style="left:2348.00px;top:197.74px;width:1.00px;height:1.50px;background:#555555;"></div>
<div class="abs" style="left:2350.00px;top:197.74px;width:4.00px;height:1.50px;background:#6a6aff;"></div>
<div class="abs" style="left:2355.00px;top:197.74px;width:7.00px;height:1.50px;background:#555555;"></div>
<div class="abs" style="left:948.00px;top:141.50px;width:1078.00px;height:394.50px;background:#f3f3f3;border-radius:11px;border:1px solid rgba(0,0,0,0.07);box-shadow:0 4px 18px rgba(0,0,0,0.2);"></div>
<div class="abs" style="left:957.00px;top:156.00px;width:1059.00px;height:45.50px;background:#fff;border:2.7px solid #3b78e6;"></div>
<div class="t" style="left:971.00px;top:167.76px;font-size:24.50px;color:#555555;font-family:'Liberation Sans',sans-serif;">&gt;</div>
<div class="abs" style="left:984.30px;top:165.00px;width:2.00px;height:27.50px;background:#333;"></div>
<div class="abs" style="left:957.00px;top:208.00px;width:1060.00px;height:39.50px;background:#2a5db9;border-radius:8px;"></div>
<div class="t" style="left:977.50px;top:215.76px;font-size:24.50px;color:#ffffff;font-family:'Liberation Sans',sans-serif;">Add Cursor Above</div>
<div class="t" style="left:977.50px;top:255.36px;font-size:24.50px;color:#5f5f5f;font-family:'Liberation Sans',sans-serif;">Add Cursor Below</div>
<div class="t" style="left:977.50px;top:294.96px;font-size:24.50px;color:#5f5f5f;font-family:'Liberation Sans',sans-serif;">Add Cursors To Bottom</div>
<div class="t" style="left:977.50px;top:334.56px;font-size:24.50px;color:#5f5f5f;font-family:'Liberation Sans',sans-serif;">Add Cursors to Line Ends</div>
<div class="t" style="left:977.50px;top:374.16px;font-size:24.50px;color:#5f5f5f;font-family:'Liberation Sans',sans-serif;">Add Cursors To Top</div>
<div class="t" style="left:977.50px;top:413.76px;font-size:24.50px;color:#5f5f5f;font-family:'Liberation Sans',sans-serif;">Add Line Comment</div>
<div class="t" style="left:977.50px;top:453.36px;font-size:24.50px;color:#5f5f5f;font-family:'Liberation Sans',sans-serif;">Add Selection To Next Find Match</div>
<div class="t" style="left:977.50px;top:492.96px;font-size:24.50px;color:#5f5f5f;font-family:'Liberation Sans',sans-serif;">Add Selection To Previous Find Match</div>
<div class="abs" style="left:948px;top:530px;width:1078px;height:4.5px;overflow:hidden"><div class="t" style="left:29.5px;top:1.56px;font-size:24.5px;color:#5f5f5f">Add Unlisted Selection To Modified Find Match</div></div>
<div class="abs" style="left:1857.50px;top:212.00px;width:38.00px;height:30.50px;border-radius:6px;background:#2a5db9;border:1px solid rgba(255,255,255,0.28);box-shadow:0 1.5px 0 rgba(0,0,0,0.22);"></div>
<svg style="left:1868.50px;top:219.50px;" width="16.00" height="14.00" viewBox="0 0 16 14"><path d="M0.5 1 H5 L11 13 H15.5 M9.5 1 H15.5" fill="none" stroke="#ffffff" stroke-width="2.1"/></svg>
<div class="abs" style="left:1904.00px;top:212.00px;width:37.50px;height:30.50px;border-radius:6px;background:#2a5db9;border:1px solid rgba(255,255,255,0.28);box-shadow:0 1.5px 0 rgba(0,0,0,0.22);"></div>
<svg style="left:1915.25px;top:219.00px;" width="15.00" height="15.00" viewBox="0 0 15 15"><path d="M5 5 V10 M10 5 V10 M5 5 H10 M5 10 H10 M5 5 H3 A2 2 0 1 1 5 3 V5 M10 5 V3 A2 2 0 1 1 12 5 H10 M10 10 H12 A2 2 0 1 1 10 12 V10 M5 10 V12 A2 2 0 1 1 3 10 H5" fill="none" stroke="#ffffff" stroke-width="1.7"/></svg>
<div class="abs" style="left:1949.00px;top:212.00px;width:35.50px;height:30.50px;border-radius:6px;background:#2a5db9;border:1px solid rgba(255,255,255,0.28);box-shadow:0 1.5px 0 rgba(0,0,0,0.22);"></div>
<svg style="left:1960.75px;top:219.00px;" width="12.00" height="15.00" viewBox="0 0 12 15"><path d="M6 15 V1.5 M0.8 6.5 L6 1.2 L11.2 6.5" fill="none" stroke="#ffffff" stroke-width="2"/></svg>
<div class="abs" style="left:1857.50px;top:252.50px;width:38.00px;height:28.50px;border-radius:6px;background:#e9e9e9;box-shadow:0 1.5px 1px #c3c3c3;"></div>
<svg style="left:1868.50px;top:260.00px;" width="16.00" height="14.00" viewBox="0 0 16 14"><path d="M0.5 1 H5 L11 13 H15.5 M9.5 1 H15.5" fill="none" stroke="#4a4a4a" stroke-width="2.1"/></svg>
<div class="abs" style="left:1904.00px;top:252.50px;width:37.50px;height:28.50px;border-radius:6px;background:#e9e9e9;box-shadow:0 1.5px 1px #c3c3c3;"></div>
<svg style="left:1915.25px;top:259.50px;" width="15.00" height="15.00" viewBox="0 0 15 15"><path d="M5 5 V10 M10 5 V10 M5 5 H10 M5 10 H10 M5 5 H3 A2 2 0 1 1 5 3 V5 M10 5 V3 A2 2 0 1 1 12 5 H10 M10 10 H12 A2 2 0 1 1 10 12 V10 M5 10 V12 A2 2 0 1 1 3 10 H5" fill="none" stroke="#4a4a4a" stroke-width="1.7"/></svg>
<div class="abs" style="left:1949.00px;top:252.50px;width:35.50px;height:28.50px;border-radius:6px;background:#e9e9e9;box-shadow:0 1.5px 1px #c3c3c3;"></div>
<svg style="left:1960.75px;top:259.50px;" width="12.00" height="15.00" viewBox="0 0 12 15"><path d="M6 0 V13.5 M0.8 8.5 L6 13.8 L11.2 8.5" fill="none" stroke="#4a4a4a" stroke-width="2"/></svg>
<div class="abs" style="left:1867.00px;top:331.50px;width:37.50px;height:28.50px;border-radius:6px;background:#e9e9e9;box-shadow:0 1.5px 1px #c3c3c3;"></div>
<svg style="left:1877.75px;top:339.00px;" width="16.00" height="14.00" viewBox="0 0 16 14"><path d="M8 0.8 L15 7.5 H11.5 V13 H4.5 V7.5 H1 Z" fill="none" stroke="#4a4a4a" stroke-width="1.8" stroke-linejoin="round"/></svg>
<div class="abs" style="left:1914.00px;top:331.50px;width:37.00px;height:28.50px;border-radius:6px;background:#e9e9e9;box-shadow:0 1.5px 1px #c3c3c3;"></div>
<svg style="left:1924.50px;top:339.00px;" width="16.00" height="14.00" viewBox="0 0 16 14"><path d="M0.5 1 H5 L11 13 H15.5 M9.5 1 H15.5" fill="none" stroke="#4a4a4a" stroke-width="2.1"/></svg>
<div class="abs" style="left:1959.50px;top:331.50px;width:25.00px;height:28.50px;border-radius:6px;background:#e9e9e9;box-shadow:0 1.5px 1px #c3c3c3;"></div>
<div class="t" style="left:1969.29px;top:337.29px;font-size:19.50px;color:#4a4a4a;font-family:'Liberation Sans',sans-serif;">I</div>
<div class="abs" style="left:1808.00px;top:410.50px;width:38.00px;height:28.50px;border-radius:6px;background:#e9e9e9;box-shadow:0 1.5px 1px #c3c3c3;"></div>
<svg style="left:1819.50px;top:417.50px;" width="15.00" height="15.00" viewBox="0 0 15 15"><path d="M5 5 V10 M10 5 V10 M5 5 H10 M5 10 H10 M5 5 H3 A2 2 0 1 1 5 3 V5 M10 5 V3 A2 2 0 1 1 12 5 H10 M10 10 H12 A2 2 0 1 1 10 12 V10 M5 10 V12 A2 2 0 1 1 3 10 H5" fill="none" stroke="#4a4a4a" stroke-width="1.7"/></svg>
<div class="abs" style="left:1854.50px;top:410.50px;width:32.00px;height:28.50px;border-radius:6px;background:#e9e9e9;box-shadow:0 1.5px 1px #c3c3c3;"></div>
<div class="t" style="left:1864.00px;top:416.29px;font-size:19.50px;color:#4a4a4a;font-family:'Liberation Sans',sans-serif;">K</div>
<div class="abs" style="left:1905.50px;top:410.50px;width:37.00px;height:28.50px;border-radius:6px;background:#e9e9e9;box-shadow:0 1.5px 1px #c3c3c3;"></div>
<svg style="left:1916.50px;top:417.50px;" width="15.00" height="15.00" viewBox="0 0 15 15"><path d="M5 5 V10 M10 5 V10 M5 5 H10 M5 10 H10 M5 5 H3 A2 2 0 1 1 5 3 V5 M10 5 V3 A2 2 0 1 1 12 5 H10 M10 10 H12 A2 2 0 1 1 10 12 V10 M5 10 V12 A2 2 0 1 1 3 10 H5" fill="none" stroke="#4a4a4a" stroke-width="1.7"/></svg>
<div class="abs" style="left:1950.50px;top:410.50px;width:34.00px;height:28.50px;border-radius:6px;background:#e9e9e9;box-shadow:0 1.5px 1px #c3c3c3;"></div>
<div class="t" style="left:1960.46px;top:416.29px;font-size:19.50px;color:#4a4a4a;font-family:'Liberation Sans',sans-serif;">C</div>
<div class="abs" style="left:1905.50px;top:450.00px;width:37.00px;height:28.50px;border-radius:6px;background:#e9e9e9;box-shadow:0 1.5px 1px #c3c3c3;"></div>
<svg style="left:1916.50px;top:457.00px;" width="15.00" height="15.00" viewBox="0 0 15 15"><path d="M5 5 V10 M10 5 V10 M5 5 H10 M5 10 H10 M5 5 H3 A2 2 0 1 1 5 3 V5 M10 5 V3 A2 2 0 1 1 12 5 H10 M10 10 H12 A2 2 0 1 1 10 12 V10 M5 10 V12 A2 2 0 1 1 3 10 H5" fill="none" stroke="#4a4a4a" stroke-width="1.7"/></svg>
<div class="abs" style="left:1950.50px;top:450.00px;width:34.00px;height:28.50px;border-radius:6px;background:#e9e9e9;box-shadow:0 1.5px 1px #c3c3c3;"></div>
<div class="t" style="left:1960.46px;top:455.79px;font-size:19.50px;color:#4a4a4a;font-family:'Liberation Sans',sans-serif;">D</div>
<div class="abs" style="left:497.00px;top:1015.00px;width:1981.00px;height:87.00px;background:#fcfcfc;"></div>
<div class="abs" style="left:497.00px;top:1015.20px;width:1981.00px;height:1.50px;background:#ebe9e9;"></div>
<div class="abs" style="left:497.00px;top:1100.70px;width:1981.00px;height:1.30px;background:#ebe9e9;"></div>
<div class="abs" style="left:1209.50px;top:1017.00px;width:1.50px;height:84.00px;background:#ececec;"></div>
<div class="abs" style="left:518.00px;top:1029.00px;width:158.00px;height:56.00px;border:1.5px solid #8d8787;border-radius:11px;background:#fff;"></div>
<svg style="left:534.00px;top:1044.00px;" width="25.00" height="25.00" viewBox="0 0 25 25"><g fill="none" stroke="#1c1a19" stroke-width="2.2"><rect x="1.1" y="1.1" width="22.8" height="22.8" rx="3"/><path d="M1.1 10.5 H23.9 M1.1 17.2 H23.9 M12.5 6 V23.9"/></g><path d="M0 3 A3 3 0 0 1 3 0 H22 A3 3 0 0 1 25 3 V6.2 H0 Z" fill="#1c1a19"/></svg>
<div class="t" style="left:574.40px;top:1045.36px;font-size:24.50px;color:#1c1a19;font-family:'Liberation Sans',sans-serif;letter-spacing:-0.140px;-webkit-text-stroke:0.35px #1c1a19;">Preview</div>
<div class="abs" style="left:691.00px;top:1029.00px;width:162.00px;height:56.00px;border:1.5px solid #8d8787;border-radius:11px;background:#fff;"></div>
<svg style="left:706.00px;top:1049.00px;" width="25.00" height="15.00" viewBox="0 0 25 15"><g fill="none" stroke="#1c1a19" stroke-width="2" stroke-linecap="round" stroke-linejoin="round"><path d="M5.5 2 L1 7.5 L5.5 13"/><path d="M19.5 2 L24 7.5 L19.5 13"/><path d="M14 0.5 L11 14.5"/></g></svg>
<div class="t" style="left:747.00px;top:1045.36px;font-size:24.50px;color:#1c1a19;font-family:'Liberation Sans',sans-serif;letter-spacing:-0.095px;-webkit-text-stroke:0.35px #1c1a19;">Compile</div>
<div class="abs" style="left:867.00px;top:1029.00px;width:180.00px;height:56.00px;border:1.5px solid #8d8787;border-radius:11px;background:#fff;"></div>
<div class="abs" style="left:990.80px;top:1029.00px;width:1.50px;height:56.00px;background:#8d8787;"></div>
<svg style="left:878.00px;top:1040.00px;" width="32.00" height="32.00" viewBox="878 1040 32 32"><path d="M882.3 1063.5 L886.6 1067.9 L896.2 1058.3 Q900.5 1060 903.5 1057 Q906.8 1053.6 905.6 1049.3 L901 1053.9 Q898.8 1055.6 897.3 1054 Q895.8 1052.2 897.6 1050.3 L901.9 1045.6 Q897.4 1044.2 894.2 1047.2 Q891.3 1050 892.1 1053.7 Z" fill="none" stroke="#1c1a19" stroke-width="1.9" stroke-linejoin="round"/></svg>
<div class="t" style="left:923.20px;top:1045.36px;font-size:24.50px;color:#1c1a19;font-family:'Liberation Sans',sans-serif;letter-spacing:-0.170px;-webkit-text-stroke:0.35px #1c1a19;">Build</div>
<svg style="left:1013.00px;top:1052.30px;" width="13.50" height="8.30" viewBox="0 0 13.5 8.3"><polyline points="0.5,0.5 6.75,7.8 13,0.5" fill="none" stroke="#2a2626" stroke-width="1.6" stroke-linecap="butt" stroke-linejoin="miter"/></svg>
<div class="abs" style="left:1062.00px;top:1029.00px;width:127.00px;height:56.00px;border:1.5px solid #8d8787;border-radius:11px;background:#fff;"></div>
<div class="abs" style="left:1133.00px;top:1029.00px;width:1.50px;height:56.00px;background:#8d8787;"></div>
<div class="t" style="left:1078.70px;top:1045.36px;font-size:24.50px;color:#1c1a19;font-family:'Liberation Sans',sans-serif;letter-spacing:0.033px;-webkit-text-stroke:0.35px #1c1a19;">Lint</div>
<svg style="left:1154.00px;top:1052.30px;" width="13.50" height="8.30" viewBox="0 0 13.5 8.3"><polyline points="0.5,0.5 6.75,7.8 13,0.5" fill="none" stroke="#2a2626" stroke-width="1.6" stroke-linecap="butt" stroke-linejoin="miter"/></svg>
<div class="t" style="left:1269.80px;top:1046.88px;font-size:24.00px;color:#1c1a19;font-family:'Liberation Sans',sans-serif;letter-spacing:-0.271px;">Results</div>
<div class="t" style="left:1407.50px;top:1046.88px;font-size:24.00px;color:#1c1a19;font-family:'Liberation Sans',sans-serif;letter-spacing:0.134px;">Code quality</div>
<div class="t" style="left:1601.60px;top:1046.88px;font-size:24.00px;color:#1c1a19;font-family:'Liberation Sans',sans-serif;letter-spacing:0.217px;">Compiled code</div>
<div class="t" style="left:1823.20px;top:1046.88px;font-size:24.00px;color:#1c1a19;font-family:'Liberation Sans',sans-serif;letter-spacing:-0.204px;">Lineage</div>
<div class="abs" style="left:1794.00px;top:1097.80px;width:143.50px;height:3.50px;background:#9d9593;"></div>
<div class="abs" style="left:2224.00px;top:1029.50px;width:232.00px;height:57.00px;border:1.5px solid #8d8787;border-radius:11px;background:#fff;"></div>
<svg style="left:2239.00px;top:1047.00px;" width="23.00" height="21.00" viewBox="0 0 23 21"><defs><linearGradient id="cg" gradientUnits="userSpaceOnUse" x1="0" y1="0" x2="23" y2="0"><stop offset="0" stop-color="#e65a1a"/><stop offset="0.5" stop-color="#e05a24"/><stop offset="0.72" stop-color="#a04495"/><stop offset="1" stop-color="#4a2ae8"/></linearGradient></defs><g fill="none" stroke="url(#cg)" stroke-width="1.45" stroke-linecap="round" stroke-linejoin="round"><path d="M11.1 4.3 L5.5 1.2 Q3.3 -0.2 1.4 1.2 Q0 2.8 1.3 4.8 Q4 8.5 4 10.4 Q4 12.5 1.3 16 Q0 18.5 1.6 19.8 Q3.2 21 5.5 19.6 L11.1 15.6"/><path d="M11.1 4.3 Q7 6.5 7 10.2 Q7 13.8 11.1 15.6"/><path d="M11.1 4.3 L18.5 0.9 Q20.5 0 21.8 1.3 Q23 2.8 21.8 4.8 Q18.6 8.5 18.6 10.4 Q18.6 12.5 21.6 16 Q22.8 18 21.6 19.5 Q20.2 21 18.3 19.9 L15.2 17.9"/><path d="M14.7 7.1 Q16.2 9.5 15.4 12 Q14.2 14.5 11.1 15.6"/></g><path d="M11.4 8.6 L12.1 9.7 L13.1 10.2 L12.1 10.7 L11.4 11.8 L10.7 10.7 L9.7 10.2 L10.7 9.7 Z" fill="#e25a22"/></svg>
<div class="t" style="left:2278.00px;top:1045.26px;font-size:24.50px;color:#1c1a19;font-family:'Liberation Sans',sans-serif;letter-spacing:0.507px;-webkit-text-stroke:0.35px #1c1a19;">dbt Copilot</div>
<svg style="left:2421.00px;top:1054.00px;" width="13.00" height="8.00" viewBox="0 0 13 8"><polyline points="0.5,0.5 6.5,7.5 12.5,0.5" fill="none" stroke="#2a2626" stroke-width="1.6" stroke-linecap="butt" stroke-linejoin="miter"/></svg>
<div class="abs" style="left:497.00px;top:1102.00px;width:1981.00px;height:1303.00px;background:#f5f5f5;"></div>
<div class="abs" style="left:497px;top:1102px;width:1981px;height:303px;background-image:radial-gradient(circle at 1.1px 1.1px, #b3b3b3 0.95px, transparent 1.25px);background-size:25.92px 25.92px;background-position:21.70px 19.00px;"></div>
<svg style="left:0.00px;top:0.00px;" width="2478.00" height="1478.00" viewBox="0 0 2478 1478"><g fill="none" stroke="#4a4545" stroke-width="1.6"><path d="M938 1252.8 H1061"/><path d="M1053 1246.5 L1062 1252.8 L1053 1259"/><path d="M1326 1252.8 C1460 1252.8 1460 1173 1596 1173"/><path d="M1588 1166.5 L1597 1173 L1588 1179.5"/><path d="M1326 1252.8 C1460 1252.8 1460 1332 1596 1332"/><path d="M1588 1325.5 L1597 1332 L1588 1338.5"/><path d="M1838 1173 H2110"/><path d="M2102 1166.5 L2111 1173 L2102 1179.5"/></g></svg>
<div class="abs" style="left:642.00px;top:1188.30px;width:296.00px;height:120.00px;background:#fff;border:1.5px solid #a9a5a5;border-radius:9px;box-shadow:0 1px 2px rgba(0,0,0,0.08);"></div>
<div class="abs" style="left:666.20px;top:1219.50px;width:57.70px;height:57.50px;background:#b2f5ea;border-radius:8px;"></div>
<svg style="left:685.80px;top:1228.60px;" width="17.50" height="19.50" viewBox="0 0 17.5 19.5"><g fill="none" stroke="#1c1a19" stroke-width="1.6"><ellipse cx="8.75" cy="3.2" rx="7.9" ry="2.6"/><path d="M0.85 3.2 V16.3 A7.9 2.6 0 0 0 16.65 16.3 V3.2"/><path d="M0.85 7.6 A7.9 2.6 0 0 0 16.65 7.6 M0.85 12 A7.9 2.6 0 0 0 16.65 12"/></g></svg>
<div class="t" style="left:679.70px;top:1254.59px;font-size:17.50px;color:#1c1a19;font-family:'Liberation Mono',monospace;letter-spacing:-0.902px;">SRC</div>
<div class="t" style="left:746.90px;top:1238.09px;font-size:20.80px;color:#1c1a19;font-family:'Liberation Sans',sans-serif;letter-spacing:-0.098px;">ecom.raw_stores</div>
<div class="abs" style="left:1063.00px;top:1186.70px;width:263.20px;height:123.00px;background:#fff;border:2.6px solid #3d3938;border-radius:11px;box-shadow:0 5px 12px rgba(0,0,0,0.16);"></div>
<div class="abs" style="left:1088.60px;top:1219.50px;width:57.40px;height:57.30px;background:#dbeafe;border-radius:8px;"></div>
<svg style="left:1108.00px;top:1228.80px;" width="18.70" height="19.00" viewBox="0 0 18.7 19"><g fill="none" stroke="#1c1a19" stroke-width="1.6" stroke-linejoin="round" transform="scale(0.935,0.904762)"><path d="M10 1 L19 5.5 V15.5 L10 20 L1 15.5 V5.5 Z"/><path d="M1 5.5 L10 10 L19 5.5 M10 10 V20"/></g></svg>
<div class="t" style="left:1102.00px;top:1254.59px;font-size:17.50px;color:#1c1a19;font-family:'Liberation Mono',monospace;letter-spacing:-0.752px;">MDL</div>
<div class="t" style="left:1170.00px;top:1237.92px;font-size:21.00px;color:#1c1a19;font-family:'Liberation Sans',sans-serif;letter-spacing:0.119px;">stg_locations</div>
<div class="abs" style="left:1598.50px;top:1109.50px;width:239.00px;height:119.00px;background:#fff;border:1.5px solid #a9a5a5;border-radius:9px;box-shadow:0 1px 2px rgba(0,0,0,0.08);"></div>
<div class="abs" style="left:1622.30px;top:1140.40px;width:56.60px;height:57.00px;background:#dbeafe;border-radius:8px;"></div>
<svg style="left:1641.50px;top:1149.70px;" width="18.70" height="19.00" viewBox="0 0 18.7 19"><g fill="none" stroke="#1c1a19" stroke-width="1.6" stroke-linejoin="round" transform="scale(0.935,0.904762)"><path d="M10 1 L19 5.5 V15.5 L10 20 L1 15.5 V5.5 Z"/><path d="M1 5.5 L10 10 L19 5.5 M10 10 V20"/></g></svg>
<div class="t" style="left:1636.00px;top:1175.59px;font-size:17.50px;color:#1c1a19;font-family:'Liberation Mono',monospace;letter-spacing:-0.752px;">MDL</div>
<div class="t" style="left:1703.00px;top:1158.72px;font-size:21.00px;color:#1c1a19;font-family:'Liberation Sans',sans-serif;">locations</div>
<div class="abs" style="left:2112.00px;top:1109.50px;width:220.00px;height:119.00px;background:#fff;border:1.5px solid #a9a5a5;border-radius:9px;box-shadow:0 1px 2px rgba(0,0,0,0.08);"></div>
<div class="abs" style="left:2135.50px;top:1140.40px;width:56.60px;height:57.00px;background:#f5b9c5;border-radius:8px;"></div>
<svg style="left:2155.00px;top:1149.50px;" width="18.00" height="18.00" viewBox="0 0 18 18"><g fill="none" stroke="#1c1a19" stroke-width="1.5"><circle cx="3" cy="3" r="2.2"/><circle cx="15" cy="8" r="2.2"/><circle cx="5" cy="15" r="2.2"/><path d="M5 4 L13 7.5 M4 5 L5 13 M13 9.5 L7 14"/></g></svg>
<div class="t" style="left:2148.00px;top:1175.59px;font-size:17.50px;color:#1c1a19;font-family:'Liberation Mono',monospace;letter-spacing:-0.752px;">SEM</div>
<div class="abs" style="left:2200px;top:1150px;width:77.5px;height:40px;overflow:hidden">
<div class="t" style="left:16.00px;top:8.72px;font-size:21.00px;color:#1c1a19;font-family:'Liberation Sans',sans-serif;">locations</div>
</div>
<div class="abs" style="left:1598.50px;top:1267.80px;width:518.00px;height:119.00px;background:#fff;border:1.5px solid #a9a5a5;border-radius:9px;box-shadow:0 1px 2px rgba(0,0,0,0.08);"></div>
<div class="abs" style="left:1622.30px;top:1298.70px;width:56.60px;height:57.00px;background:#bdfbc5;border-radius:8px;"></div>
<svg style="left:1641.50px;top:1308.00px;" width="18.00" height="20.00" viewBox="0 0 18 20"><g fill="none" stroke="#1c1a19" stroke-width="1.6" stroke-linejoin="round"><rect x="1.8" y="2.4" width="14.4" height="16.6" rx="1"/><rect x="5.4" y="0.8" width="7.2" height="3.4" rx="1" fill="#bdfbc5"/><path d="M5.3 11 L8 13.6 L12.6 8.6"/></g></svg>
<div class="t" style="left:1636.00px;top:1333.59px;font-size:17.50px;color:#1c1a19;font-family:'Liberation Mono',monospace;letter-spacing:-0.752px;">TST</div>
<div class="t" style="left:1703.00px;top:1317.52px;font-size:21.00px;color:#1c1a19;font-family:'Liberation Sans',sans-serif;letter-spacing:0.025px;">test_does_location_opened_at_trunc_t...</div>
<div class="abs" style="left:1697.40px;top:1145.00px;width:549.00px;height:71.00px;background:rgba(255,255,255,0.86);border:1.5px solid #8d8787;border-radius:11px;"></div>
<div class="abs" style="left:2042.50px;top:1145.00px;width:1.50px;height:71.00px;background:#8d8787;"></div>
<div class="t" style="left:1720.00px;top:1169.01px;font-size:25.50px;color:#1c1a19;font-family:'Liberation Sans',sans-serif;letter-spacing:-0.250px;">2+stg_locations+2</div>
<div class="t" style="left:2062.00px;top:1169.01px;font-size:25.50px;color:#1c1a19;font-family:'Liberation Sans',sans-serif;letter-spacing:0.528px;-webkit-text-stroke:0.50px #1c1a19;">Update Graph</div>
<div class="abs" style="left:2279.30px;top:1145.00px;width:69.20px;height:70.50px;background:#fff;border:1.5px solid #8d8787;border-radius:11px;"></div>
<svg style="left:2298.00px;top:1164.00px;" width="32.00" height="32.00" viewBox="2298 1164 32 32"><g fill="none" stroke="#1c1a19" stroke-width="2" stroke-linecap="round" stroke-linejoin="round"><path d="M2301.2 1173.2 V1168.8 Q2301.2 1167.4 2302.6 1167.4 H2307 M2321.8 1167.4 H2326.2 Q2327.6 1167.4 2327.6 1168.8 V1173.2 M2327.6 1187.4 V1191.8 Q2327.6 1193.2 2326.2 1193.2 H2321.8 M2307 1193.2 H2302.6 Q2301.2 1193.2 2301.2 1191.8 V1187.4"/></g></svg>
<div class="abs" style="left:2364.00px;top:1145.00px;width:69.30px;height:70.50px;background:#fff;border:1.5px solid #8d8787;border-radius:11px;"></div>
<svg style="left:2384.00px;top:1162.00px;" width="30.00" height="36.00" viewBox="2384 1162 30 36"><g fill="none" stroke="#1c1a19" stroke-width="2" stroke-linecap="round" stroke-linejoin="round"><path d="M2409.2 1182.8 A11.2 11.2 0 1 1 2398.3 1171.2 H2408.4"/><path d="M2403.5 1166.3 L2408.5 1171.2 L2403.5 1176.1"/></g></svg>
<div class="abs" style="left:0;top:1405px;width:2478px;height:73px;background:linear-gradient(#ffffff,#fbfbfb 40%,#e6e6e6);"></div>
<div class="abs" style="left:0.00px;top:1404.60px;width:2478.00px;height:1.40px;background:#e8e6e6;"></div>
<div class="abs" style="left:0.00px;top:1405.00px;width:2.00px;height:73.00px;background:#e4e4e4;"></div>
<div class="abs" style="left:71.00px;top:1406.00px;width:1.50px;height:72.00px;background:#e2e0e0;"></div>
<div class="abs" style="left:78.50px;top:1407.20px;width:1691.00px;height:68.50px;border:1.2px solid #ebebeb;border-radius:14px;"></div>
<svg style="left:29.00px;top:1436.50px;" width="13.50" height="8.00" viewBox="0 0 13.5 8"><polyline points="0.6,7.4 6.75,0.8 12.9,7.4" fill="none" stroke="#3a3636" stroke-width="1.9" stroke-linejoin="round"/></svg>
<div class="t" style="left:100.80px;top:1430.24px;font-size:25.00px;color:#6b6463;font-family:'Liberation Sans',sans-serif;letter-spacing:0.056px;">dbt build --select &lt;model_name&gt;</div>
<div class="abs" style="left:1791.00px;top:1423.00px;width:72.00px;height:36.00px;background:#5a3ce6;border-radius:18px;"></div>
<div class="abs" style="left:1831.00px;top:1428.20px;width:25.20px;height:25.20px;background:#fff;border-radius:50%;"></div>
<svg style="left:1804.50px;top:1435.00px;" width="17.00" height="11.50" viewBox="0 0 17 11.5"><polyline points="0.8,5.8 5.2,10.3 16.2,0.8" fill="none" stroke="#fff" stroke-width="1.8"/></svg>
<div class="t" style="left:1885.60px;top:1428.01px;font-size:25.50px;color:#3f3b3a;font-family:'Liberation Sans',sans-serif;letter-spacing:0.746px;-webkit-text-stroke:0.35px #3f3b3a;">Defer to staging/production</div>
<svg style="left:2220.50px;top:1428.20px;" width="20.50" height="20.50" viewBox="0 0 20.5 20.5"><g fill="none" stroke="#555" stroke-width="1.3"><circle cx="10.25" cy="10.25" r="9.5"/><path d="M7 7.6 A3.3 3.3 0 1 1 10.3 11 V12.6"/></g><circle cx="10.3" cy="15.5" r="0.9" fill="#555"/></svg>
<div class="abs" style="left:2263.2px;top:1420.2px;width:126.6px;height:42.8px;border-radius:11px;background:linear-gradient(#c4f7ca,#b9ecbd);"></div>
<svg style="left:2274.20px;top:1429.20px;" width="24.70" height="24.50" viewBox="0 0 24.7 24.5"><circle cx="12.35" cy="12.25" r="11.2" fill="none" stroke="#1c1a19" stroke-width="2"/></svg>
<div class="t" style="left:2310.80px;top:1429.35px;font-size:24.40px;color:#1c1a19;font-family:'Liberation Sans',sans-serif;letter-spacing:-0.883px;-webkit-text-stroke:0.35px #1c1a19;">Ready</div>
<div class="abs" style="left:2404.00px;top:1414.30px;width:59.70px;height:54.50px;background:#fff;border:1.5px solid #8d8787;border-radius:12px;"></div>
<div class="abs" style="left:2421.40px;top:1438.80px;width:5.20px;height:5.20px;background:#1c1a19;border-radius:50%;"></div>
<div class="abs" style="left:2430.40px;top:1438.80px;width:5.20px;height:5.20px;background:#1c1a19;border-radius:50%;"></div>
<div class="abs" style="left:2439.40px;top:1438.80px;width:5.20px;height:5.20px;background:#1c1a19;border-radius:50%;"></div>
<svg style="left:2454.00px;top:1454.00px;" width="24.00" height="24.00" viewBox="0 0 24 24"><path d="M24 0 V24 H0 A24 24 0 0 0 24 0 Z" fill="#000"/></svg>
</body></html>
